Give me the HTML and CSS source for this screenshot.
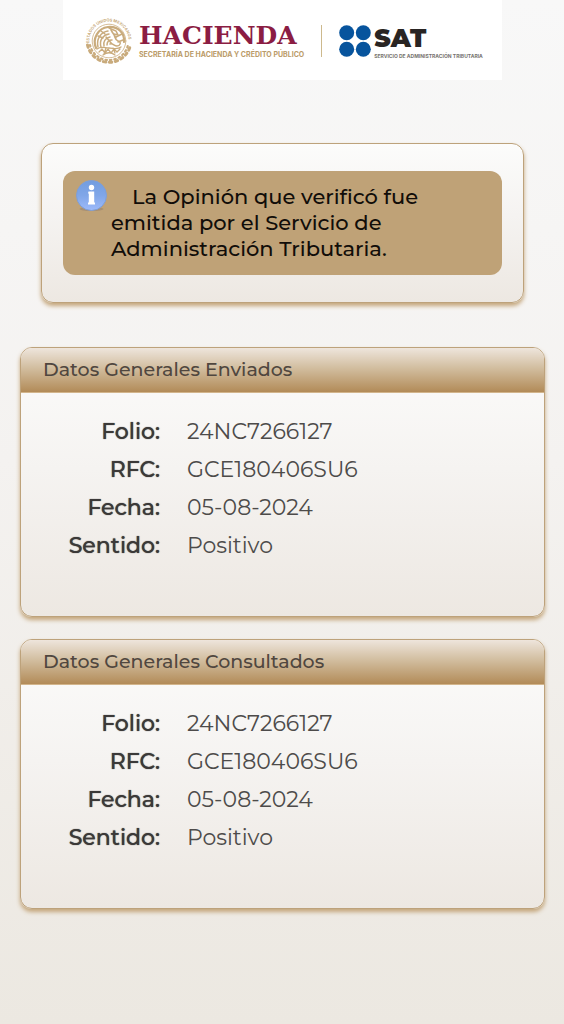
FILE: index.html
```html
<!DOCTYPE html>
<html lang="es">
<head>
<meta charset="utf-8">
<meta name="viewport" content="width=device-width, initial-scale=1">
<title>Opinión del cumplimiento</title>
<link rel="stylesheet" href="styles.css">
</head>
<body>
<header class="banner">
  <div class="brand">
    <svg class="seal" viewBox="0 0 48 48" aria-hidden="true">
      <defs><path id="arc" d="M4.500 27A19.700 19.700 0 1 1 43.500 27"/></defs>
      <text class="seal-text"><textPath href="#arc" startOffset="1">ESTADOS UNIDOS MEXICANOS</textPath></text>
      <g fill="none" stroke="#c9ab7c" stroke-linecap="round">
        <path d="M2.500 28A22 22 0 0 0 45.500 28" stroke-width="3" stroke-dasharray="2.500 3.500"/>
        <path d="M5 28A19.500 19.500 0 0 0 43 28" stroke-width="2.200" stroke-dasharray="1.500 3"/>
        <circle cx="24" cy="24" r="16.800" stroke-width=".8"/>
        <path d="M11 31C7 22 13 11 23 10c10-1 17 6 16 15" stroke-width="2.200"/>
        <path d="M13 30c-2-8 3-15 10-16M16 30c-2-7 2-12 8-13M19 29c-1-4 1-8 6-9M22 28c0-3 2-5 5-5" stroke-width="1.500"/>
        <path d="M24 11l7 3 2 4-4-1M27 15c4 4 2 8 6 9s2 5-1 5-4-3-7-2M31 20l6-3M33 25l5-2M16 14l4 3M13 19l5 2M26 13l5 8M21 20l6 7" stroke-width="1.500"/>
        <path d="M12 32c4-3 8-1 12-1s8 2 12-1M14 35l3-3 3 4 3-4 3 4 3-4 3 3 3-3M18 38c4-3 8-3 12 0M21 31l-2 6M28 31l2 5" stroke-width="1.300"/>
      </g>
    </svg>
    <div class="hacienda">
      <span class="hacienda-name">HACIENDA</span>
      <span class="hacienda-sub">SECRETARÍA DE HACIENDA Y CRÉDITO PÚBLICO</span>
    </div>
  </div>
  <span class="rule"></span>
  <div class="brand brand-sat">
    <svg class="dots" viewBox="0 0 32 32" fill="#07549d" aria-hidden="true"><circle cx="7.700" cy="7.700" r="7.500"/><circle cx="24.300" cy="7.700" r="7.500"/><circle cx="7.700" cy="24.300" r="7.500"/><circle cx="24.300" cy="24.300" r="7.500"/></svg>
    <div class="sat">
      <span class="sat-name">SAT</span>
      <span class="sat-sub">SERVICIO DE ADMINISTRACIÓN TRIBUTARIA</span>
    </div>
  </div>
</header>
<main class="content">
  <section class="notice">
    <div class="message">
      <svg class="info" viewBox="0 0 34 34" aria-hidden="true">
        <defs><linearGradient id="blue" x1="0" y1="0" x2="0" y2="1"><stop offset="0" stop-color="#729ddf"/><stop offset=".5" stop-color="#80a6e8"/><stop offset="1" stop-color="#9dbafa"/></linearGradient></defs>
        <ellipse cx="16.500" cy="31" rx="12" ry="2" fill="#927e70" opacity=".5"/>
        <circle cx="16.500" cy="17.500" r="15" fill="url(#blue)" stroke="#7f9fd6"/>
        <circle cx="16.500" cy="9.500" r="2.700" fill="#fff"/>
        <path d="M13.500 13.500h5.700v11h.8v2h-7v-2h.8v-9h-.8z" fill="#fff"/>
      </svg>
      <p class="message-text">La Opinión que verificó fue emitida por el Servicio de Administración Tributaria.</p>
    </div>
  </section>
  <section class="panel">
    <h2 class="panel-title">Datos Generales Enviados</h2>
    <dl class="data">
      <dt>Folio:</dt><dd>24NC7266127</dd>
      <dt>RFC:</dt><dd>GCE180406SU6</dd>
      <dt>Fecha:</dt><dd>05-08-2024</dd>
      <dt>Sentido:</dt><dd>Positivo</dd>
    </dl>
  </section>
  <section class="panel">
    <h2 class="panel-title">Datos Generales Consultados</h2>
    <dl class="data">
      <dt>Folio:</dt><dd>24NC7266127</dd>
      <dt>RFC:</dt><dd>GCE180406SU6</dd>
      <dt>Fecha:</dt><dd>05-08-2024</dd>
      <dt>Sentido:</dt><dd>Positivo</dd>
    </dl>
  </section>
</main>
</body>
</html>
```
FILE: styles.css
```css
* { box-sizing: border-box; }
body {
  margin: 0;
  min-height: 100vh;
  font-family: Montserrat, Inter, sans-serif;
  color: #3b3938;
  background: linear-gradient(#f8f8f8, #f4f2f0 45%, #ece8e1);
}
.banner {
  display: flex;
  align-items: center;
  gap: 17px;
  height: 80px;
  margin: 0 62px 0 63px;
  padding: 2px 16px 0 22px;
  background: #fff;
}
.brand { display: flex; align-items: center; gap: 6px; }
.brand-sat { gap: 3px; }
.seal { width: 48px; height: 48px; flex: none; }
.seal-text { font: 700 4px Inter, sans-serif; fill: #c9ab7c; }
.hacienda, .sat { display: flex; flex-direction: column; white-space: nowrap; }
.hacienda-name { font: 700 25px/28px "DejaVu Serif", serif; color: #8b1d43; }
.hacienda-sub { font: 700 7px/10px Inter, sans-serif; color: #bb9b68; }
.rule { flex: none; width: 1px; height: 32px; background: #cdb98d; }
.dots { width: 32px; height: 32px; flex: none; }
.sat { padding-top: 2px; }
.sat-name { font: 900 25px/26px Montserrat, Inter, sans-serif; color: #292523; }
.sat-sub { padding-top: 2px; font: 700 5px/6px Inter, sans-serif; color: #77736f; }
.content {
  display: flex;
  flex-direction: column;
  gap: 22px;
  padding: 63px 19px 40px 20px;
}
.notice, .panel {
  border: 1px solid #bda27b;
  border-radius: 12px;
  background: linear-gradient(#fcfcfb, #f5f3f1 45%, #ede8e2);
  box-shadow: 0 3px 4px #c4a67b;
}
.notice { margin: 0 21px 22px; padding: 27px 21px; }
.message {
  display: flex;
  align-items: flex-start;
  gap: 2px;
  padding: 7px 24px 13px 12px;
  border-radius: 12px;
  background: #bfa277;
}
.info { width: 34px; height: 34px; flex: none; }
.message-text {
  margin: 6px 0 0;
  max-width: 320px;
  font-size: 21px;
  line-height: 26px;
  font-weight: 500;
  text-indent: 21px;
  color: #110d09;
}
.panel { overflow: hidden; min-height: 270px; }
.panel-title {
  margin: 0;
  padding: 0 22px;
  font-size: 19px;
  line-height: 44px;
  font-weight: 500;
  color: #50473f;
  background: linear-gradient(#eee5dc, #d2bea0 45%, #b28b58);
  border-bottom: 1px solid #d2b58c;
}
.data {
  display: grid;
  grid-template-columns: 139px 1fr;
  column-gap: 27px;
  margin: 20px 0 0;
  font-size: 22px;
  line-height: 38px;
}
.data dt { text-align: right; font-weight: 500; text-shadow: 0 0 1px #3b3938; }
.data dd { margin: 0; font-weight: 400; color: #4d4b4a; }
```
